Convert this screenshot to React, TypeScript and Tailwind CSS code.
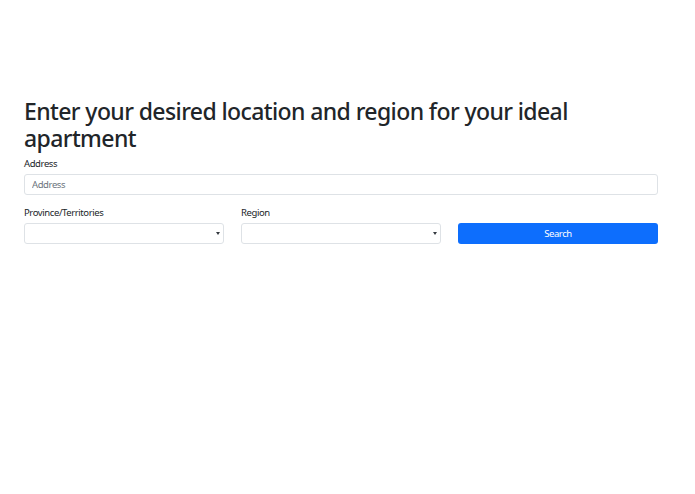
export default function App(): JSX.Element {
  return (
    <div className="min-h-[494px] bg-white text-[#212529]" style={{ fontFamily: '"Noto Sans", "Open Sans", sans-serif' }}>
      <div className="flex flex-col px-[24px] pt-[98px] w-[682px]">
        <h1 className="text-[23px] leading-[27px] font-medium tracking-[-0.6px] mb-[4px]">
          Enter your desired location and region for your ideal apartment
        </h1>

        <label className="text-[9.5px] leading-[14px] tracking-[-0.4px] pt-[1px] mb-[3px]">Address</label>
        <input
          className="h-[21px] w-full rounded-[3px] border border-[#dee2e6] px-[7px] text-[9.5px] tracking-[-0.4px] placeholder:text-[#6c757d] outline-none"
          placeholder="Address"
        />

        <div className="mt-[10px] grid grid-cols-3 gap-[17px]">
          <div className="flex flex-col">
            <label className="text-[9.5px] leading-[14px] tracking-[-0.4px] pt-[1px] mb-[3px]">Province/Territories</label>
            <div className="relative h-[21px] rounded-[3px] border border-[#dee2e6]">
              <span className="absolute right-[3px] top-[8px] border-x-[2px] border-t-[3px] border-x-transparent border-t-[#343a40]" />
            </div>
          </div>
          <div className="flex flex-col">
            <label className="text-[9.5px] leading-[14px] tracking-[-0.4px] pt-[1px] mb-[3px]">Region</label>
            <div className="relative h-[21px] rounded-[3px] border border-[#dee2e6]">
              <span className="absolute right-[3px] top-[8px] border-x-[2px] border-t-[3px] border-x-transparent border-t-[#343a40]" />
            </div>
          </div>
          <div className="flex flex-col justify-end">
            <button className="h-[21px] rounded-[3px] bg-[#0d6efd] pt-[2px] text-[9.5px] tracking-[-0.4px] text-white">Search</button>
          </div>
        </div>
      </div>
    </div>
  );
}
